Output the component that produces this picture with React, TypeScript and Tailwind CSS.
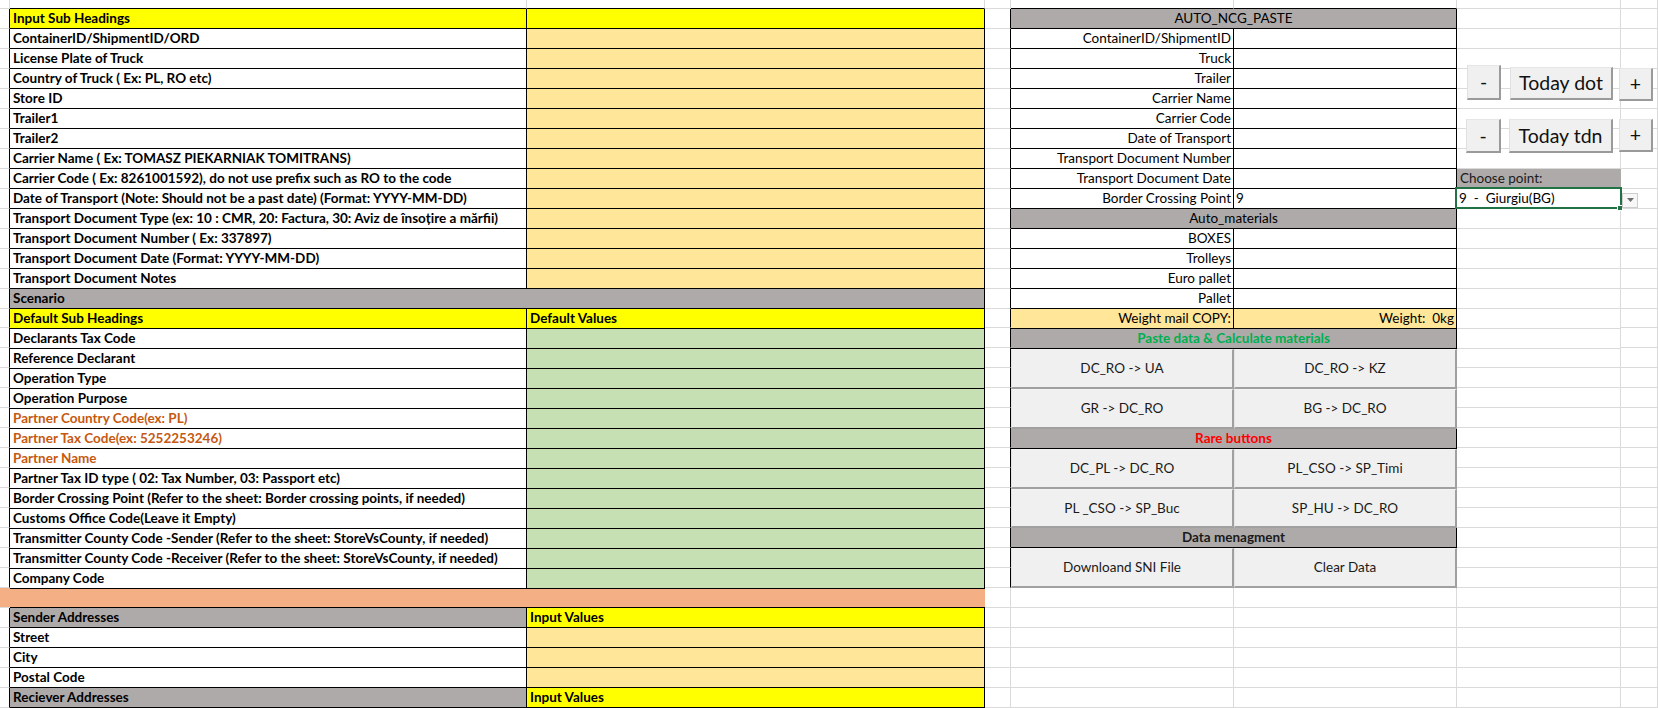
import React from "react";

// sheet colours
const fills = {
  none: "bg-white",
  yellow: "bg-[#ffff00]",
  tan: "bg-[#ffe699]",
  green: "bg-[#c6e0b4]",
  gray: "bg-[#aeaaaa]",
} as const;

type Fill = keyof typeof fills;

type LeftRow =
  | { kind: "pair"; label: string; value?: string; labelFill: Fill; valueFill: Fill; orange?: boolean }
  | { kind: "merged"; label: string }
  | { kind: "spacer" };

type RightRow =
  | { kind: "head"; text: string; tone: "plain" | "green" | "red" | "bold" }
  | { kind: "field"; label: string; value?: string; tan?: boolean }
  | { kind: "buttons"; left: string; right: string }
  | { kind: "blank" };

const inputLabels = [
  "ContainerID/ShipmentID/ORD",
  "License Plate of Truck",
  "Country of Truck ( Ex: PL, RO etc)",
  "Store ID",
  "Trailer1",
  "Trailer2",
  "Carrier Name ( Ex: TOMASZ PIEKARNIAK TOMITRANS)",
  "Carrier Code ( Ex: 8261001592), do not use prefix such as RO to the code",
  "Date of Transport (Note: Should not be a past date) (Format: YYYY-MM-DD)",
  "Transport Document Type (ex: 10 : CMR, 20: Factura, 30: Aviz de însoțire a mărfii)",
  "Transport Document Number ( Ex: 337897)",
  "Transport Document Date (Format: YYYY-MM-DD)",
  "Transport Document Notes",
];

const defaultLabels = [
  "Declarants Tax Code",
  "Reference Declarant",
  "Operation Type",
  "Operation Purpose",
  "Partner Country Code(ex: PL)",
  "Partner Tax Code(ex: 5252253246)",
  "Partner Name",
  "Partner Tax ID type ( 02: Tax Number, 03: Passport etc)",
  "Border Crossing Point (Refer to the sheet: Border crossing points, if needed)",
  "Customs Office Code(Leave it Empty)",
  "Transmitter County Code -Sender (Refer to the sheet: StoreVsCounty, if needed)",
  "Transmitter County Code -Receiver (Refer to the sheet: StoreVsCounty, if needed)",
  "Company Code",
];

const partnerRows = ["Partner Country Code(ex: PL)", "Partner Tax Code(ex: 5252253246)", "Partner Name"];

const leftRows: LeftRow[] = [
  { kind: "pair", label: "Input Sub Headings", labelFill: "yellow", valueFill: "yellow" },
  ...inputLabels.map((label): LeftRow => ({ kind: "pair", label, labelFill: "none", valueFill: "tan" })),
  { kind: "merged", label: "Scenario" },
  { kind: "pair", label: "Default Sub Headings", value: "Default Values", labelFill: "yellow", valueFill: "yellow" },
  ...defaultLabels.map((label): LeftRow => ({
    kind: "pair",
    label,
    labelFill: "none",
    valueFill: "green",
    orange: partnerRows.includes(label),
  })),
  { kind: "spacer" },
  { kind: "pair", label: "Sender Addresses", value: "Input Values", labelFill: "gray", valueFill: "yellow" },
  { kind: "pair", label: "Street", labelFill: "none", valueFill: "tan" },
  { kind: "pair", label: "City", labelFill: "none", valueFill: "tan" },
  { kind: "pair", label: "Postal Code", labelFill: "none", valueFill: "tan" },
  { kind: "pair", label: "Reciever Addresses", value: "Input Values", labelFill: "gray", valueFill: "yellow" },
];

const rightRows: RightRow[] = [
  { kind: "head", text: "AUTO_NCG_PASTE", tone: "plain" },
  { kind: "field", label: "ContainerID/ShipmentID" },
  { kind: "field", label: "Truck" },
  { kind: "field", label: "Trailer" },
  { kind: "field", label: "Carrier Name" },
  { kind: "field", label: "Carrier Code" },
  { kind: "field", label: "Date of Transport" },
  { kind: "field", label: "Transport Document Number" },
  { kind: "field", label: "Transport Document Date" },
  { kind: "field", label: "Border Crossing Point", value: "9" },
  { kind: "head", text: "Auto_materials", tone: "plain" },
  { kind: "field", label: "BOXES" },
  { kind: "field", label: "Trolleys" },
  { kind: "field", label: "Euro pallet" },
  { kind: "field", label: "Pallet" },
  { kind: "field", label: "Weight mail COPY:", value: "Weight:  0kg", tan: true },
  { kind: "head", text: "Paste data & Calculate materials", tone: "green" },
  { kind: "buttons", left: "DC_RO -> UA", right: "DC_RO -> KZ" },
  { kind: "buttons", left: "GR -> DC_RO", right: "BG -> DC_RO" },
  { kind: "head", text: "Rare buttons", tone: "red" },
  { kind: "buttons", left: "DC_PL -> DC_RO", right: "PL_CSO -> SP_Timi" },
  { kind: "buttons", left: "PL _CSO -> SP_Buc", right: "SP_HU -> DC_RO" },
  { kind: "head", text: "Data menagment", tone: "bold" },
  { kind: "buttons", left: "Downloand SNI File", right: "Clear Data" },
  { kind: "blank" },
  { kind: "blank" },
  { kind: "blank" },
  { kind: "blank" },
  { kind: "blank" },
  { kind: "blank" },
];

const toneClass = {
  plain: "",
  green: "font-bold text-[#00b050]",
  red: "font-bold text-[#ff0000]",
  bold: "font-bold text-[#1a1a1a]",
};

const ROWS = Array.from({ length: 35 }, (_, i) => i + 1);

function ColumnA() {
  return (
    <div className="flex w-[10px] shrink-0 flex-col">
      <div className="h-[9px] border-r border-b border-[#dadada]" />
      {ROWS.map((r) =>
        r === 30 ? (
          <div key={r} className="h-5 border-b border-b-[#dadada] bg-[#f4b084]" />
        ) : (
          <div key={r} className="h-5 border-r border-b border-r-black border-b-[#dadada]" />
        )
      )}
    </div>
  );
}

function LeftTable() {
  return (
    <div className="flex w-[975px] shrink-0 flex-col font-bold">
      <div className="flex h-[9px]">
        <div className="w-[517px] border-r border-b border-r-[#dadada] border-b-black" />
        <div className="w-[458px] border-r border-b border-r-[#dadada] border-b-black" />
      </div>
      {leftRows.map((row, i) => {
        if (row.kind === "merged")
          return (
            <div key={i} className="h-5 border-r border-b border-black bg-[#aeaaaa] pl-[3px]">
              {row.label}
            </div>
          );
        if (row.kind === "spacer")
          return (
            <div key={i} className="flex h-5">
              <div className="w-[517px] border-b border-black bg-[#f4b084]" />
              <div className="w-[458px] border-b border-black bg-[#f4b084]" />
            </div>
          );
        return (
          <div key={i} className="flex h-5">
            <div
              className={`w-[517px] shrink-0 overflow-hidden whitespace-nowrap border-r border-b border-black pl-[3px] ${fills[row.labelFill]} ${row.orange ? "text-[#c65911]" : ""}`}
            >
              {row.label}
            </div>
            <div className={`w-[458px] shrink-0 border-r border-b border-black pl-[3px] ${fills[row.valueFill]}`}>
              {row.value}
            </div>
          </div>
        );
      })}
    </div>
  );
}

function ColumnD() {
  return (
    <div className="flex w-[26px] shrink-0 flex-col">
      <div className="h-[9px] border-r border-b border-[#dadada]" />
      {ROWS.map((r) => (
        <div
          key={r}
          className={`h-5 border-r border-b border-b-[#dadada] ${r <= 29 ? "border-r-black" : "border-r-[#dadada]"}`}
        />
      ))}
    </div>
  );
}

function MacroButton({ label }: { label: string }) {
  return (
    <div className="flex w-[223px] items-center justify-center border-t border-l border-r-2 border-b-2 border-t-[#f4f4f4] border-l-[#e4e4e4] border-r-[#a0a0a0] border-b-[#a0a0a0] bg-[#f0f0f0] text-[#1a1a1a]">
      {label}
    </div>
  );
}

function RightPanel() {
  return (
    <div className="flex w-[446px] shrink-0 flex-col">
      <div className="flex h-[9px]">
        <div className="w-[223px] border-r border-b border-r-[#dadada] border-b-black" />
        <div className="w-[223px] border-r border-b border-r-[#dadada] border-b-black" />
      </div>
      {rightRows.map((row, i) => {
        if (row.kind === "head")
          return (
            <div key={i} className={`h-5 border-r border-b border-black bg-[#aeaaaa] text-center ${toneClass[row.tone]}`}>
              {row.text}
            </div>
          );
        if (row.kind === "buttons")
          return (
            <div key={i} className="flex h-10">
              <MacroButton label={row.left} />
              <MacroButton label={row.right} />
            </div>
          );
        if (row.kind === "blank")
          return (
            <div key={i} className="flex h-5">
              <div className="w-[223px] border-r border-b border-[#dadada]" />
              <div className="w-[223px] border-r border-b border-[#dadada]" />
            </div>
          );
        const bg = row.tan ? "bg-[#ffe699]" : "bg-white";
        return (
          <div key={i} className="flex h-5">
            <div className={`w-[223px] whitespace-nowrap border-r border-b border-black pr-[2px] text-right ${bg}`}>
              {row.label}
            </div>
            <div
              className={`w-[223px] whitespace-pre border-r border-b border-black ${row.tan ? "pr-[2px] text-right" : "pl-[2px]"} ${bg}`}
            >
              {row.value}
            </div>
          </div>
        );
      })}
    </div>
  );
}

function DateButton({ label, className }: { label: string; className: string }) {
  return (
    <div
      className={`absolute flex items-center justify-center border-t border-l border-r-2 border-b-2 border-t-[#e6e6e6] border-l-[#e0e0e0] border-r-[#9a9a9a] border-b-[#9a9a9a] bg-[#f0f0f0] text-[19.5px] leading-none text-[#111] ${className}`}
    >
      {label}
    </div>
  );
}

function SideArea() {
  return (
    <div className="relative flex flex-1">
      <div className="flex w-[164px] shrink-0 flex-col">
        <div className="h-[9px] border-r border-b border-[#dadada]" />
        {ROWS.map((r) => {
          if (r === 9)
            return (
              <div key={r} className="h-5 border-b border-b-[#aeaaaa] bg-[#aeaaaa] pl-[3px] text-[#1a1a1a]">
                Choose point:
              </div>
            );
          if (r === 10)
            return (
              <div key={r} className="relative h-5 whitespace-pre border-r border-b border-[#dadada] pl-[2px]">
                {"9  -  Giurgiu(BG)"}
                <div className="absolute -top-[2px] -right-[2px] -bottom-[1px] -left-[2px] border-2 border-[#217346]" />
                <div className="absolute -right-[3px] -bottom-[3px] h-[6px] w-[6px] border border-white bg-[#217346]" />
                <div className="absolute top-[4px] left-[165px] flex h-[15px] w-[16px] items-center justify-center border border-[#cdcdcd] bg-[#f7f7f7]">
                  <svg width="7" height="4" viewBox="0 0 7 4">
                    <path d="M0 0H7L3.5 4Z" fill="#6e6e6e" />
                  </svg>
                </div>
              </div>
            );
          return <div key={r} className="h-5 border-r border-b border-[#dadada]" />;
        })}
      </div>
      <div className="flex flex-1 flex-col">
        <div className="h-[9px] border-r border-b border-[#dadada]" />
        {ROWS.map((r) => (
          <div key={r} className="h-5 border-r border-b border-[#dadada]" />
        ))}
      </div>

      {/* date shift buttons floating over the grid */}
      <DateButton label="-" className="top-[65px] left-[10px] h-[35px] w-[34px]" />
      <DateButton label="Today dot" className="top-[67px] left-[53px] h-[33px] w-[103px]" />
      <DateButton label="+" className="top-[68px] left-[162px] h-[33px] w-[34px]" />
      <DateButton label="-" className="top-[119px] left-[9px] h-[34px] w-[35px]" />
      <DateButton label="Today tdn" className="top-[119px] left-[52px] h-[34px] w-[104px]" />
      <DateButton label="+" className="top-[119px] left-[162px] h-[33px] w-[34px]" />
    </div>
  );
}

export default function App() {
  return (
    <div className="flex h-[708px] w-[1658px] overflow-hidden bg-white font-['Lato',sans-serif] text-[13.5px] leading-[19px] text-black">
      <ColumnA />
      <LeftTable />
      <ColumnD />
      <RightPanel />
      <SideArea />
    </div>
  );
}
